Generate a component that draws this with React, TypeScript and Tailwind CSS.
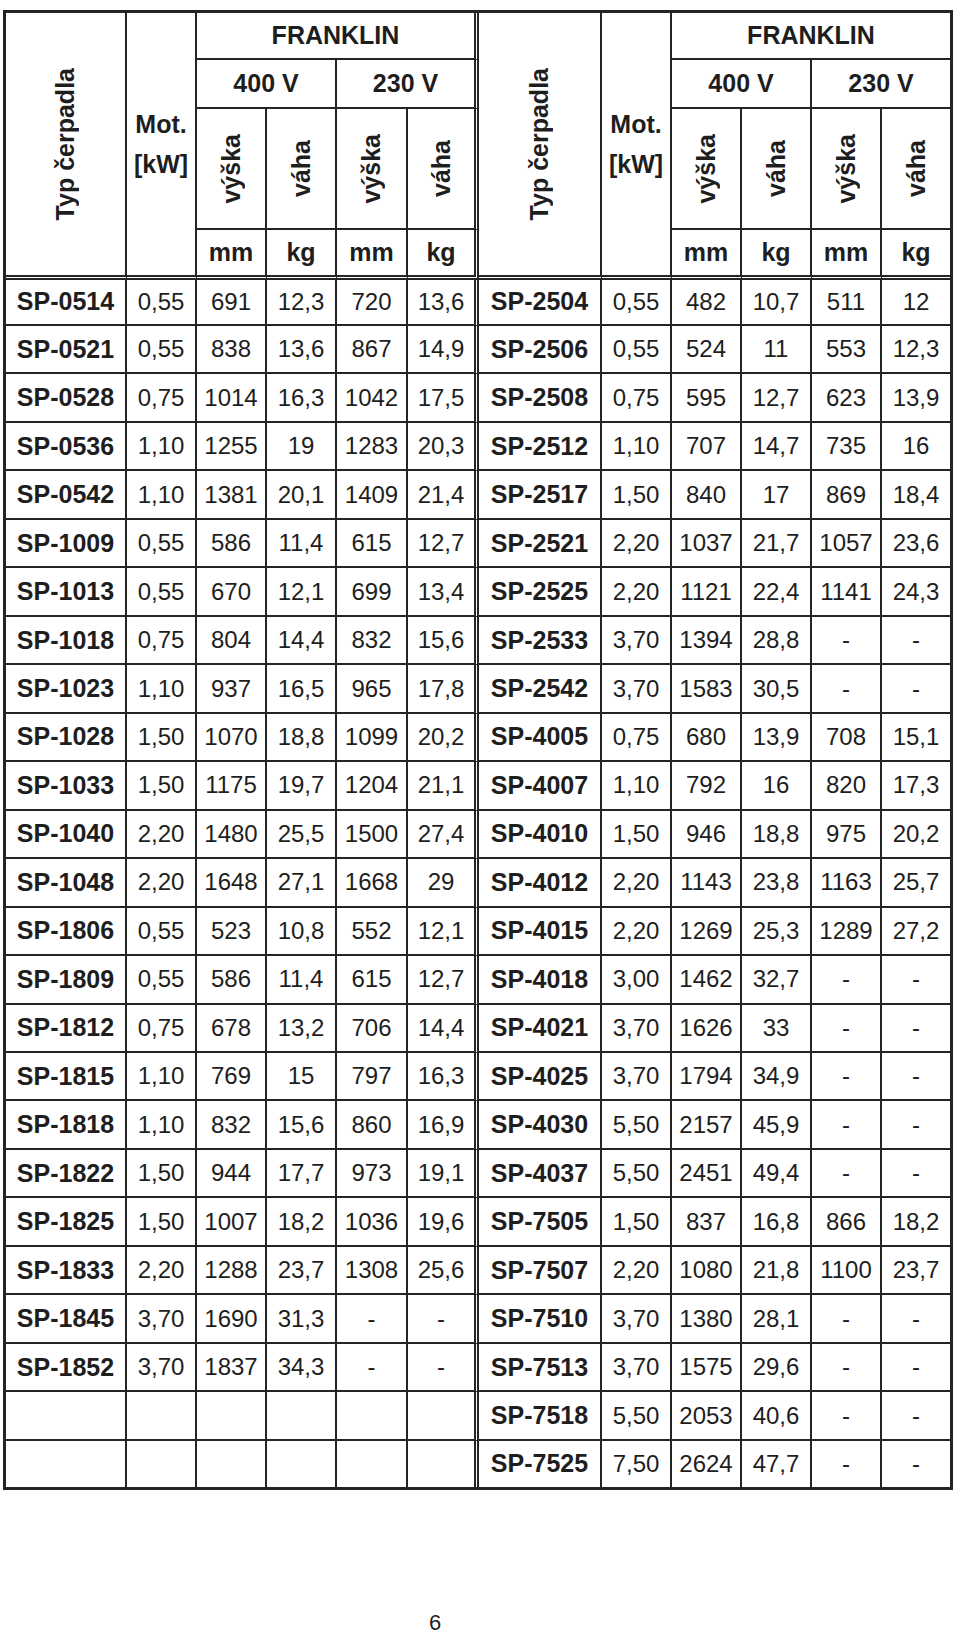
import React from "react";

type Bottom = "solid" | "double" | "none";

const leftRows: string[][] = [
  ["SP-0514", "0,55", "691", "12,3", "720", "13,6"],
  ["SP-0521", "0,55", "838", "13,6", "867", "14,9"],
  ["SP-0528", "0,75", "1014", "16,3", "1042", "17,5"],
  ["SP-0536", "1,10", "1255", "19", "1283", "20,3"],
  ["SP-0542", "1,10", "1381", "20,1", "1409", "21,4"],
  ["SP-1009", "0,55", "586", "11,4", "615", "12,7"],
  ["SP-1013", "0,55", "670", "12,1", "699", "13,4"],
  ["SP-1018", "0,75", "804", "14,4", "832", "15,6"],
  ["SP-1023", "1,10", "937", "16,5", "965", "17,8"],
  ["SP-1028", "1,50", "1070", "18,8", "1099", "20,2"],
  ["SP-1033", "1,50", "1175", "19,7", "1204", "21,1"],
  ["SP-1040", "2,20", "1480", "25,5", "1500", "27,4"],
  ["SP-1048", "2,20", "1648", "27,1", "1668", "29"],
  ["SP-1806", "0,55", "523", "10,8", "552", "12,1"],
  ["SP-1809", "0,55", "586", "11,4", "615", "12,7"],
  ["SP-1812", "0,75", "678", "13,2", "706", "14,4"],
  ["SP-1815", "1,10", "769", "15", "797", "16,3"],
  ["SP-1818", "1,10", "832", "15,6", "860", "16,9"],
  ["SP-1822", "1,50", "944", "17,7", "973", "19,1"],
  ["SP-1825", "1,50", "1007", "18,2", "1036", "19,6"],
  ["SP-1833", "2,20", "1288", "23,7", "1308", "25,6"],
  ["SP-1845", "3,70", "1690", "31,3", "-", "-"],
  ["SP-1852", "3,70", "1837", "34,3", "-", "-"],
  ["", "", "", "", "", ""],
  ["", "", "", "", "", ""],
];

const rightRows: string[][] = [
  ["SP-2504", "0,55", "482", "10,7", "511", "12"],
  ["SP-2506", "0,55", "524", "11", "553", "12,3"],
  ["SP-2508", "0,75", "595", "12,7", "623", "13,9"],
  ["SP-2512", "1,10", "707", "14,7", "735", "16"],
  ["SP-2517", "1,50", "840", "17", "869", "18,4"],
  ["SP-2521", "2,20", "1037", "21,7", "1057", "23,6"],
  ["SP-2525", "2,20", "1121", "22,4", "1141", "24,3"],
  ["SP-2533", "3,70", "1394", "28,8", "-", "-"],
  ["SP-2542", "3,70", "1583", "30,5", "-", "-"],
  ["SP-4005", "0,75", "680", "13,9", "708", "15,1"],
  ["SP-4007", "1,10", "792", "16", "820", "17,3"],
  ["SP-4010", "1,50", "946", "18,8", "975", "20,2"],
  ["SP-4012", "2,20", "1143", "23,8", "1163", "25,7"],
  ["SP-4015", "2,20", "1269", "25,3", "1289", "27,2"],
  ["SP-4018", "3,00", "1462", "32,7", "-", "-"],
  ["SP-4021", "3,70", "1626", "33", "-", "-"],
  ["SP-4025", "3,70", "1794", "34,9", "-", "-"],
  ["SP-4030", "5,50", "2157", "45,9", "-", "-"],
  ["SP-4037", "5,50", "2451", "49,4", "-", "-"],
  ["SP-7505", "1,50", "837", "16,8", "866", "18,2"],
  ["SP-7507", "2,20", "1080", "21,8", "1100", "23,7"],
  ["SP-7510", "3,70", "1380", "28,1", "-", "-"],
  ["SP-7513", "3,70", "1575", "29,6", "-", "-"],
  ["SP-7518", "5,50", "2053", "40,6", "-", "-"],
  ["SP-7525", "7,50", "2624", "47,7", "-", "-"],
];

function Cell({
  colEnd,
  bottom,
  className,
  children,
}: {
  colEnd: number;
  bottom: Bottom;
  className?: string;
  children?: React.ReactNode;
}) {
  const right =
    colEnd === 5
      ? "border-r-[5px] [border-right-style:double]"
      : colEnd === 11
      ? ""
      : "border-r-2";
  const bot =
    bottom === "double"
      ? "border-b-[5px] [border-bottom-style:double]"
      : bottom === "none"
      ? ""
      : "border-b-2";
  return (
    <div
      className={`flex items-center justify-center border-[#242424] ${right} ${bot} ${
        className ?? ""
      }`}
    >
      {children}
    </div>
  );
}

function Rot({ children }: { children: React.ReactNode }) {
  return (
    <span className="[writing-mode:vertical-rl] rotate-180 whitespace-nowrap">{children}</span>
  );
}

const H = "font-bold text-[25px] leading-none";

export default function App() {
  const row1: React.ReactNode[] = [];
  [0, 6].forEach((o) => {
    row1.push(
      <Cell key={`typ${o}`} colEnd={o} bottom="double" className={`row-span-4 ${H}`}>
        <Rot>Typ čerpadla</Rot>
      </Cell>
    );
    row1.push(
      <Cell
        key={`mot${o}`}
        colEnd={o + 1}
        bottom="double"
        className="row-span-4 flex-col font-bold text-[25px] leading-[40px]"
      >
        <span>Mot.</span>
        <span>[kW]</span>
      </Cell>
    );
    row1.push(
      <Cell key={`fr${o}`} colEnd={o + 5} bottom="solid" className={`col-span-4 ${H}`}>
        FRANKLIN
      </Cell>
    );
  });
  const row2: React.ReactNode[] = [];
  [0, 6].forEach((o) => {
    row2.push(
      <Cell key={`v4${o}`} colEnd={o + 3} bottom="solid" className={`col-span-2 ${H}`}>
        400 V
      </Cell>
    );
    row2.push(
      <Cell key={`v2${o}`} colEnd={o + 5} bottom="solid" className={`col-span-2 ${H}`}>
        230 V
      </Cell>
    );
  });
  const row3: React.ReactNode[] = [];
  const row4: React.ReactNode[] = [];
  [0, 6].forEach((o) => {
    ["výška", "váha", "výška", "váha"].forEach((t, i) => {
      row3.push(
        <Cell key={`r3${o}${i}`} colEnd={o + 2 + i} bottom="solid" className={H}>
          <Rot>{t}</Rot>
        </Cell>
      );
    });
    ["mm", "kg", "mm", "kg"].forEach((t, i) => {
      row4.push(
        <Cell key={`r4${o}${i}`} colEnd={o + 2 + i} bottom="double" className={H}>
          {t}
        </Cell>
      );
    });
  });

  const body: React.ReactNode[] = [];
  leftRows.forEach((lr, r) => {
    const last = r === leftRows.length - 1;
    const cells = [...lr, ...rightRows[r]];
    cells.forEach((v, c) => {
      const bold = c === 0 || c === 6;
      body.push(
        <Cell
          key={`d${r}-${c}`}
          colEnd={c}
          bottom={last ? "none" : "solid"}
          className={bold ? "font-bold text-[25px] leading-none" : "text-[24px] leading-none"}
        >
          {v}
        </Cell>
      );
    });
  });

  return (
    <div className="min-h-[1635px] bg-white text-[#1e1e1e] font-['Liberation_Sans',Arial,sans-serif]">
      <div className="pt-[10px] pl-[3px]">
        <div className="w-[950px] border-[3px] border-[#242424]">
          <div className="grid grid-cols-[121px_70px_70px_70px_71px_71px_123px_70px_70px_70px_70px_68px] grid-rows-[47.3px_49px_121px_49.7px_46px_repeat(23,48.48px)_46px]">
            {row1}
            {row2}
            {row3}
            {row4}
            {body}
          </div>
        </div>
      </div>
      <div className="mt-[122px] pl-[429px] text-[22px] leading-[22px]">6</div>
    </div>
  );
}
